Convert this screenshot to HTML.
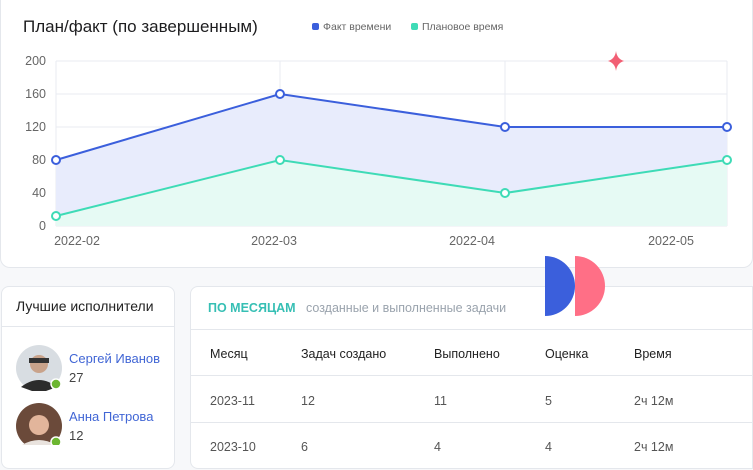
<!DOCTYPE html>
<html><head><meta charset="utf-8"><style>
*{box-sizing:border-box;margin:0;padding:0}
body{width:753px;height:470px;background:#f7f8fa;font-family:"Liberation Sans",sans-serif;position:relative;overflow:hidden;color:#222}
.card{position:absolute;background:#fff;border:1px solid #e4e7ec;border-radius:8px}
.t{position:absolute;white-space:nowrap}
</style></head><body>
<div class="card" style="left:0;top:0;width:753px;height:268px;border-top:none;border-radius:0 0 10px 10px"></div>
<div class="t" style="left:23px;top:17px;font-size:17px;color:#1d1d1f">План/факт (по завершенным)</div>
<div class="t" style="left:312px;top:21px;font-size:10.5px;color:#666"><span style="display:inline-block;width:7px;height:7px;border-radius:2px;background:#3b5fdc;margin-right:4px"></span>Факт времени</div>
<div class="t" style="left:411px;top:21px;font-size:10.5px;color:#666"><span style="display:inline-block;width:7px;height:7px;border-radius:2px;background:#3edbb6;margin-right:4px"></span>Плановое время</div>
<svg style="position:absolute;left:0;top:0" width="753" height="268">
<g stroke="#e8ebf2" stroke-width="1">
<line x1="56" y1="61" x2="727" y2="61"/><line x1="56" y1="94" x2="727" y2="94"/><line x1="56" y1="127" x2="727" y2="127"/><line x1="56" y1="160" x2="727" y2="160"/><line x1="56" y1="193" x2="727" y2="193"/><line x1="56" y1="226" x2="727" y2="226"/>
<line x1="56" y1="61" x2="56" y2="226"/><line x1="280" y1="61" x2="280" y2="226"/><line x1="505" y1="61" x2="505" y2="226"/><line x1="727" y1="61" x2="727" y2="226"/>
</g>
<polygon points="56,160 280,94 505,127 727,127 727,226 56,226" fill="#e8ecfc"/>
<polygon points="56,216 280,160 505,193 727,160 727,226 56,226" fill="#e6faf4"/>
<polyline points="56,160 280,94 505,127 727,127" fill="none" stroke="#3b5fdc" stroke-width="2"/>
<polyline points="56,216 280,160 505,193 727,160" fill="none" stroke="#3edbb6" stroke-width="2"/>
<g fill="#fff" stroke="#3b5fdc" stroke-width="2"><circle cx="56" cy="160" r="4"/><circle cx="280" cy="94" r="4"/><circle cx="505" cy="127" r="4"/><circle cx="727" cy="127" r="4"/></g>
<g fill="#fff" stroke="#3edbb6" stroke-width="2"><circle cx="56" cy="216" r="4"/><circle cx="280" cy="160" r="4"/><circle cx="505" cy="193" r="4"/><circle cx="727" cy="160" r="4"/></g>
<path d="M616 51 Q617 59 624 61 Q617 63 616 71 Q615 63 608 61 Q615 59 616 51Z" fill="#f25f74"/>
<g font-size="12.5" fill="#666" font-family="Liberation Sans"><text x="46" y="65" text-anchor="end">200</text><text x="46" y="98" text-anchor="end">160</text><text x="46" y="131" text-anchor="end">120</text><text x="46" y="164" text-anchor="end">80</text><text x="46" y="197" text-anchor="end">40</text><text x="46" y="230" text-anchor="end">0</text>
<text x="77" y="245" text-anchor="middle">2022-02</text><text x="274" y="245" text-anchor="middle">2022-03</text><text x="472" y="245" text-anchor="middle">2022-04</text><text x="671" y="245" text-anchor="middle">2022-05</text></g>
</svg>
<div class="card" style="left:1px;top:286px;width:174px;height:183px"></div>
<div style="position:absolute;left:1px;top:326px;width:174px;height:1px;background:#e4e7ec"></div>
<div class="t" style="left:16px;top:298px;font-size:14px;color:#222">Лучшие исполнители</div>
<svg style="position:absolute;left:16px;top:345px" width="48" height="100">
<circle cx="23" cy="23" r="23" fill="#d8dde2"/><circle cx="23" cy="19" r="9" fill="#c9a38b"/><rect x="13" y="13" width="20" height="5" fill="#333"/><path d="M5 42 Q23 28 41 42 L30 46 L16 46Z" fill="#2c2c2c"/>
<circle cx="23" cy="81" r="23" fill="#6b4a3a"/><circle cx="23" cy="80" r="10" fill="#e2b59b"/><path d="M6 100 Q23 90 40 100Z" fill="#e9e3de"/>
<circle cx="40" cy="39" r="5" fill="#6cb631" stroke="#fff" stroke-width="1.5"/><circle cx="40" cy="97" r="5" fill="#6cb631" stroke="#fff" stroke-width="1.5"/>
</svg>
<div class="t" style="left:69px;top:351px;font-size:13px;color:#4166d5">Сергей Иванов</div>
<div class="t" style="left:69px;top:370px;font-size:13px;color:#444">27</div>
<div class="t" style="left:69px;top:409px;font-size:13px;color:#4166d5">Анна Петрова</div>
<div class="t" style="left:69px;top:428px;font-size:13px;color:#444">12</div>
<div class="card" style="left:190px;top:286px;width:563px;height:183px;border-radius:8px 0 0 8px"></div>
<div style="position:absolute;left:190px;top:329px;width:563px;height:1px;background:#e4e7ec"></div>
<div style="position:absolute;left:190px;top:375px;width:563px;height:1px;background:#e4e7ec"></div>
<div style="position:absolute;left:190px;top:422px;width:563px;height:1px;background:#e4e7ec"></div>
<div class="t" style="left:208px;top:301px;font-size:12.5px;font-weight:bold;color:#36bfb4">ПО МЕСЯЦАМ</div>
<div class="t" style="left:306px;top:301px;font-size:12.5px;color:#9aa3ad">созданные и выполненные задачи</div>
<div style="font-size:12.5px;color:#222">
<div class="t" style="left:210px;top:347px">Месяц</div><div class="t" style="left:301px;top:347px">Задач создано</div><div class="t" style="left:434px;top:347px">Выполнено</div><div class="t" style="left:545px;top:347px">Оценка</div><div class="t" style="left:634px;top:347px">Время</div>
</div>
<div style="font-size:12.5px;color:#555">
<div class="t" style="left:210px;top:394px">2023-11</div><div class="t" style="left:301px;top:394px">12</div><div class="t" style="left:434px;top:394px">11</div><div class="t" style="left:545px;top:394px">5</div><div class="t" style="left:634px;top:394px">2ч 12м</div>
<div class="t" style="left:210px;top:440px">2023-10</div><div class="t" style="left:301px;top:440px">6</div><div class="t" style="left:434px;top:440px">4</div><div class="t" style="left:545px;top:440px">4</div><div class="t" style="left:634px;top:440px">2ч 12м</div>
</div>
<svg style="position:absolute;left:545px;top:256px" width="62" height="62">
<path d="M0 0 A30 30 0 0 1 0 60Z" fill="#3b5fdc"/>
<path d="M30 0 A30 30 0 0 1 30 60Z" fill="#ff6f86"/>
</svg>
</body></html>
